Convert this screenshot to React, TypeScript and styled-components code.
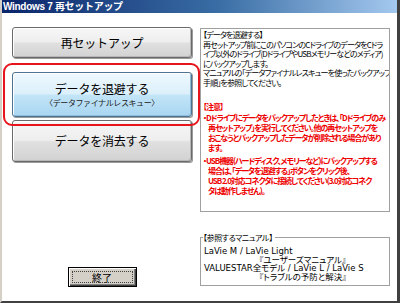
import styled, { createGlobalStyle } from "styled-components";

const GlobalStyle = createGlobalStyle`
  html, body {
    margin: 0;
    padding: 0;
    background: #ffffff;
  }
  body {
    font-family: "Noto Sans CJK JP", "Liberation Sans", sans-serif;
  }
`;

const Window = styled.div`
  width: 400px;
  height: 303px;
  box-sizing: border-box;
  display: flex;
  flex-direction: column;
  background: #ffffff;
  border-left: 2px solid #d4d0c8;
  border-right: 3px solid #404040;
  border-bottom: 2px solid #404040;
  overflow: hidden;
`;

const TitleBar = styled.div`
  height: 13px;
  flex-shrink: 0;
  margin-left: -2px;
  margin-right: -3px;
  padding-left: 3px;
  background: linear-gradient(to right, #0a246a 0%, #3a6ea5 55%, #a6caf0 100%);
  color: #ffffff;
  font-family: "Liberation Sans", "Noto Sans CJK JP", sans-serif;
  font-weight: bold;
  font-size: 10px;
  line-height: 13px;
  letter-spacing: -0.3px;
  white-space: nowrap;
`;

const Body = styled.div`
  flex: 1;
  display: flex;
  gap: 8px;
  padding: 14px 7px 0 10px;
`;

const LeftCol = styled.div`
  position: relative;
  width: 180px;
  display: flex;
  flex-direction: column;
  align-items: stretch;
`;

const MenuButton = styled.div<{ $tone: "gray" | "blue"; $h: number }>`
  height: ${(p) => p.$h}px;
  box-sizing: border-box;
  border: 1px solid ${(p) => (p.$tone === "blue" ? "#4e7390" : "#6a6a6a")};
  border-radius: 3px;
  box-shadow: inset 1px 1px 0 #ffffff, inset -1px -1px 0 ${(p) =>
      p.$tone === "blue" ? "#8fbcd8" : "#b8b8b8"},
    1px 1px 0 #9a9a9a;
  background: ${(p) =>
    p.$tone === "blue"
      ? "linear-gradient(#eef8fe 0%, #dcf0fb 48%, #c2e4f7 52%, #a9d6f2 100%)"
      : "linear-gradient(#f6f6f6 0%, #eeeeee 48%, #e0e0e0 52%, #d2d2d2 100%)"};
  display: flex;
  flex-direction: column;
  align-items: center;
  justify-content: center;
  color: #000000;
`;

const ButtonLabel = styled.div`
  font-size: 12px;
  line-height: 14px;
  letter-spacing: -0.2px;
  white-space: nowrap;
`;

const ButtonSub = styled.div`
  font-size: 8px;
  line-height: 10px;
  margin-top: 2px;
  letter-spacing: -0.4px;
  color: #202020;
  white-space: nowrap;
`;

const Highlight = styled.div`
  position: absolute;
  left: -9px;
  top: 36px;
  width: 197px;
  height: 63px;
  box-sizing: border-box;
  border: 2px solid #e8141b;
  border-radius: 9px;
  pointer-events: none;
`;

const Spacer = styled.div`
  flex: 1;
`;

const ExitButton = styled.div`
  align-self: center;
  width: 69px;
  height: 20px;
  box-sizing: border-box;
  margin-bottom: 14px;
  border: 1px solid #000000;
  box-shadow: inset 1px 1px 0 #ffffff, inset -1px -1px 0 #404040,
    inset -2px -2px 0 #808080;
  background: #d4d0c8;
  display: flex;
  align-items: center;
  justify-content: center;
  position: relative;
  font-size: 10px;
  color: #000000;
  &::after {
    content: "";
    position: absolute;
    left: 3px;
    top: 3px;
    right: 3px;
    bottom: 3px;
    border: 1px dotted #404040;
  }
`;

const RightCol = styled.div`
  width: 190px;
  display: flex;
  flex-direction: column;
  padding-top: 1px;
`;

const InfoBox = styled.div`
  height: 184px;
  box-sizing: border-box;
  border: 1px solid #a0a0a0;
  padding: 1px 2px;
  font-size: 8px;
  line-height: 9.5px;
  letter-spacing: -0.85px;
  font-feature-settings: "palt";
  white-space: nowrap;
  overflow: hidden;
`;

const Line = styled.div<{ $indent?: boolean; $gapTop?: number }>`
  padding-left: ${(p) => (p.$indent ? 5 : 0)}px;
  margin-top: ${(p) => p.$gapTop ?? 0}px;
`;

const Notice = styled.div`
  color: #ee0000;
  font-weight: bold;
  line-height: 10px;
  letter-spacing: -1.05px;
`;

const GroupBox = styled.div`
  position: relative;
  margin-top: 25px;
  height: 49px;
  box-sizing: border-box;
  border: 1px solid #a0a0a0;
  padding: 9px 3px 0;
  font-size: 8.5px;
  line-height: 8.5px;
  font-feature-settings: "palt";
  white-space: nowrap;
`;

const Legend = styled.span`
  position: absolute;
  left: 2px;
  top: -5px;
  padding-right: 2px;
  background: #ffffff;
  font-size: 8px;
  line-height: 10px;
  letter-spacing: -0.4px;
`;

const ManualLine = styled.div<{ $indent?: boolean }>`
  padding-left: ${(p) => (p.$indent ? 55 : 0)}px;
  font-family: "DejaVu Sans", "Noto Sans CJK JP", sans-serif;
  letter-spacing: 0;
`;

export default function App() {
  return (
    <>
      <GlobalStyle />
      <Window>
        <TitleBar>Windows 7 再セットアップ</TitleBar>
        <Body>
          <LeftCol>
            <MenuButton $tone="gray" $h={31}>
              <ButtonLabel>再セットアップ</ButtonLabel>
            </MenuButton>
            <MenuButton $tone="blue" $h={45} style={{ marginTop: 14 }}>
              <ButtonLabel>データを退避する</ButtonLabel>
              <ButtonSub>〈データファイナルレスキュー〉</ButtonSub>
            </MenuButton>
            <MenuButton $tone="gray" $h={42} style={{ marginTop: 3 }}>
              <ButtonLabel>データを消去する</ButtonLabel>
            </MenuButton>
            <Highlight />
            <Spacer />
            <ExitButton>終了</ExitButton>
          </LeftCol>
          <RightCol>
            <InfoBox>
              <Line>【データを退避する】</Line>
              <Line>再セットアップ前にこのパソコンのCドライブのデータをCドラ</Line>
              <Line>イブ以外のドライブ(DドライブやUSBメモリーなどのメディア)</Line>
              <Line>にバックアップします。</Line>
              <Line>マニュアルの「データファイナルレスキューを使ったバックアップ</Line>
              <Line>手順」を参照してください。</Line>
              <Notice>
                <Line $gapTop={15}>【注意】</Line>
                <Line $gapTop={1}>・Dドライブにデータをバックアップしたときは、「Dドライブのみ</Line>
                <Line $indent>再セットアップ」を実行してください。他の再セットアップを</Line>
                <Line $indent>おこなうとバックアップしたデータが削除される場合があり</Line>
                <Line $indent>ます。</Line>
                <Line $gapTop={3}>・USB機器(ハードディスク、メモリーなど)にバックアップする</Line>
                <Line $indent>場合は、「データを退避する」ボタンをクリック後、</Line>
                <Line $indent>USB 2.0対応コネクタに接続してください(3.0対応コネク</Line>
                <Line $indent>タは動作しません)。</Line>
              </Notice>
            </InfoBox>
            <GroupBox>
              <Legend>【参照するマニュアル】</Legend>
              <ManualLine>LaVie M / LaVie Light</ManualLine>
              <ManualLine $indent>『ユーザーズマニュアル』</ManualLine>
              <ManualLine>VALUESTAR全モデル / LaVie L / LaVie S</ManualLine>
              <ManualLine $indent>『トラブルの予防と解決』</ManualLine>
            </GroupBox>
          </RightCol>
        </Body>
      </Window>
    </>
  );
}
